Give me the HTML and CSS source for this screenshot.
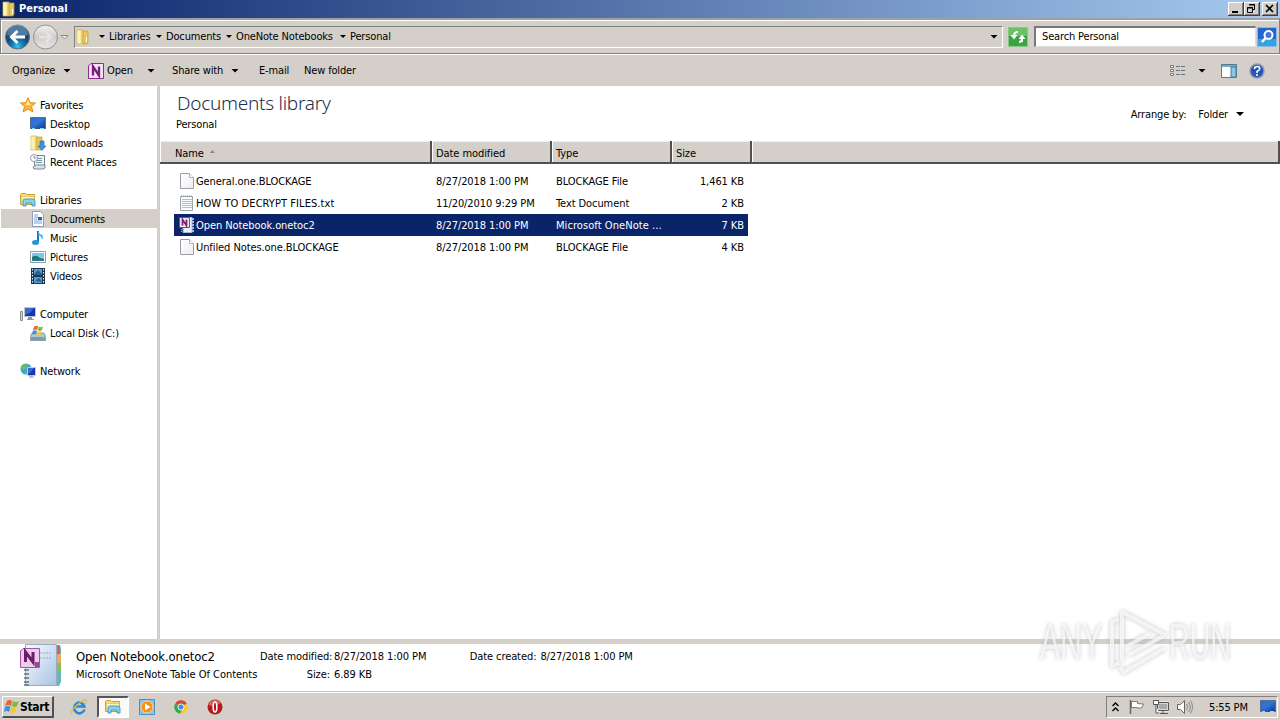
FILE: index.html
```html
<!DOCTYPE html>
<html lang="en">
<head>
<meta charset="utf-8">
<title>Personal</title>
<link rel="stylesheet" href="styles.css">
</head>
<body>
<svg class="defs" aria-hidden="true">
<defs>
<linearGradient id="gold" x2="1"><stop stop-color="#f8e596"/><stop offset=".5" stop-color="#fff3b4"/><stop offset="1" stop-color="#dfb94b"/></linearGradient>
<linearGradient id="blue" x2="1" y2="1"><stop stop-color="#1b4fb5"/><stop offset=".5" stop-color="#2b6fd6"/><stop offset="1" stop-color="#12398f"/></linearGradient>
<linearGradient id="paper" x2="1" y2="1"><stop stop-color="#fff"/><stop offset="1" stop-color="#eceef0"/></linearGradient>
<radialGradient id="orb" cy=".9"><stop stop-color="#39c5f0"/><stop offset=".5" stop-color="#1777b4"/><stop offset="1" stop-color="#194878"/></radialGradient>
<linearGradient id="grey" y2="1" x2="0"><stop stop-color="#f4f2f0"/><stop offset=".5" stop-color="#cfccc9"/><stop offset="1" stop-color="#e9e7e5"/></linearGradient>
<symbol id="folder" viewBox="0 0 16 16"><path d="M2 1h6v14H2z" fill="url(#gold)" stroke="#d5b04c" stroke-width=".7"/><path d="M8 2h5v11l-1 2H8z" fill="#e9c65c" stroke="#c89e35" stroke-width=".7"/><path d="M3 2v12" stroke="#fff7c8"/><path d="M7 1v14" stroke="#e7c75f"/><path d="M11.500 8v5" stroke="#fff"/></symbol>
<symbol id="page" viewBox="0 0 16 16"><path d="M1.5.5h9l4 4v11h-13z" fill="url(#paper)" stroke="#9b9fa3"/><path d="M10.500.5v4h4" fill="#fff" stroke="#b1b5b8"/></symbol>
<symbol id="txt" viewBox="0 0 16 16"><path d="M1.500 1.500h12v14h-12z" fill="#f5fbfc" stroke="#9da9ae"/><path d="M3 4.500h10M3 6.500h10M3 8.500h10M3 10.500h10M3 12.500h10" stroke="#abc5cd"/><path d="M2 1h12" stroke="#829299" stroke-dasharray="1 1"/></symbol>
<symbol id="lib" viewBox="0 0 16 16"><path d="M.5 2.500l1-1h4l1 1h8v10H.5z" fill="#f7dd79" stroke="#c69f35"/><path d="M1.500 4.500h13l-1 5H1z" fill="#fff3ac" stroke="#dfbd54" stroke-width=".7"/><path d="M3 9q0-2 2-2h7q3 0 3 2v5h-3v-3H6v3H3z" fill="#8bd0ef" stroke="#358bb8" stroke-width=".8"/></symbol>
<symbol id="monitor" viewBox="0 0 16 16"><path d="M.5 1.500h15v11H.5z" fill="url(#blue)" stroke="#56708f"/><path d="M1 2h14L8 8l-7 2z" fill="#3976d5" opacity=".7"/><path d="M1 12.500h14" stroke="#34537e"/><path d="M2 12.500h3M10 12.500h4" stroke="#8edaff"/></symbol>
<symbol id="one" viewBox="0 0 16 16"><path d="M3 .5h12.500v15H.5V3z" fill="#f7e2f5" stroke="#8c2b8d"/><path d="M5 12.500v-9L11 12.500v-9" fill="none" stroke="#742077" stroke-width="2.300"/></symbol>
<symbol id="notebook" viewBox="0 0 16 16"><path d="M4 .5h9v15H4z" fill="#e8f0fb" stroke="#a8bbd4"/><path d="M14 1v14" stroke="#aeb9cc" stroke-width="2" stroke-dasharray="2 1"/><path d="M.5.500h10v10H.5z" fill="#f8e4f7" stroke="#963698"/><path d="M3.500 8.500V2.500L7.500 8.500V2.500" fill="none" stroke="#712474" stroke-width="1.700"/><path d="M2 12.500h3M2 14.500h3" stroke="#aaa" stroke-dasharray="1 1"/></symbol>
<symbol id="flag4" viewBox="0 0 16 16"><path d="M3 2q3-2 5 0L7 7Q4 5 1 7z" fill="#ef632c"/><path d="M9 2q3 2 6 0l-2 5q-3 2-5 0z" fill="#7dbd35"/><path d="M1 8q3-2 5.500 0L5 13Q3 11 0 13z" fill="#3593e2"/><path d="M7.500 8q3 2 5.500 0l-2 5q-3 2-5 0z" fill="#f9c72b"/></symbol>
</defs>
</svg>
<div class="window">
<header class="title"><svg class="i16"><use href="#folder"/></svg><b>Personal</b>
<div class="controls">
<svg class="cap" viewBox="0 0 16 14"><path d="M0 0h16v14H0z" fill="#404040"/><path d="M0 0h15v13H0z" fill="#fff"/><path d="M1 1h14v12H1z" fill="#808080"/><path d="M1 1h13v11H1z" fill="#d4d0c8"/><path d="M4 9h6v2H4z"/></svg>
<svg class="cap" viewBox="0 0 16 14"><path d="M0 0h16v14H0z" fill="#404040"/><path d="M0 0h15v13H0z" fill="#fff"/><path d="M1 1h14v12H1z" fill="#808080"/><path d="M1 1h13v11H1z" fill="#d4d0c8"/><path d="M5.500 3v-.5h5v5H9M5 3h6M3.500 5.500h5v5h-5zM3 6h6" fill="none" stroke="#000"/></svg>
<svg class="cap close" viewBox="0 0 16 14"><path d="M0 0h16v14H0z" fill="#404040"/><path d="M0 0h15v13H0z" fill="#fff"/><path d="M1 1h14v12H1z" fill="#808080"/><path d="M1 1h13v11H1z" fill="#d4d0c8"/><path d="M4 3l7 7M11 3l-7 7" stroke="#000" stroke-width="1.600"/></svg>
</div></header>
<nav class="nav">
<svg class="orbs" viewBox="0 0 66 28"><circle cx="12.500" cy="14" r="12" fill="url(#orb)" stroke="#5b7488"/><path d="M2 12a10.500 10.500 0 0 1 21 0q-10 4-21 0z" fill="#9bc9de" opacity=".4"/><path d="M20 14H7M12.500 8l-6 6 6 6" fill="none" stroke="#fff" stroke-width="3"/><circle cx="40.500" cy="14" r="12" fill="url(#grey)" stroke="#92918f"/><path d="M34 14h12M41 9l5 5-5 5" fill="none" stroke="#e5e3e1" stroke-width="2.500"/><path d="M56 12.500h7l-3.500 3.500z" fill="#eee" stroke="#8c8984"/></svg>
<div class="address"><svg class="i16"><use href="#folder"/></svg><i class="tri s c0"></i><span class="crumb w41">Libraries</span><i class="tri s"></i><span class="crumb w54">Documents</span><i class="tri s"></i><span class="crumb w98">OneNote Notebooks</span><i class="tri s"></i><span class="crumb">Personal</span><i class="tri end"></i></div>
<svg class="refresh" viewBox="0 0 20 20"><path d="M.5.500h19v19H.5z" fill="#3aa443" stroke="#8ac58b"/><path d="M1 1h18v8H1z" fill="#69c263"/><path d="M10 5q-4 0-4 4M14 15v-4" fill="none" stroke="#fff" stroke-width="2"/><path d="M2.500 8h7L6 12.500zM10.500 12h7L14 7.500z" fill="#fff"/><path d="M14 11q0 4-3 4" fill="none" stroke="#fff" stroke-width="2"/></svg>
<div class="search">Search Personal</div>
<svg class="find" viewBox="0 0 20 20"><path d="M.5.500h19v19H.5z" fill="#2464ce" stroke="#8ab9e3"/><path d="M1 12h18v7H1z" fill="#32a6dc"/><circle cx="11.500" cy="8" r="4" fill="#3d78d8" stroke="#fff" stroke-width="2"/><path d="M8.500 11L5 15" stroke="#fff" stroke-width="2.500"/></svg>
</nav>
<div class="tools">
<span class="t1">Organize</span><i class="tri t2"></i><svg class="i16 t3"><use href="#one"/></svg><span class="t4">Open</span><i class="tri t5"></i><span class="t6">Share with</span><i class="tri t7"></i><span class="t8">E-mail</span><span class="t9">New folder</span>
<div class="right"><svg class="i16" viewBox="0 0 16 16"><path d="M.5 2.500h3v2h-3zM.5 6.500h3v2h-3zM.5 10.500h3v2h-3z" fill="#fff" stroke="#777"/><path d="M6 3.500h4m1 0h4M6 7.500h4m1 0h4M6 11.500h4m1 0h4" stroke="#667380"/></svg><i class="tri"></i><svg class="i16 pane" viewBox="0 0 16 16"><path d="M.5 1.500h15v13H.5z" fill="#fff" stroke="#557b92"/><path d="M1 2h14v2H1z" fill="#75a9c4"/><path d="M10 4h5v10h-5z" fill="#86c8df" stroke="#457e9d"/></svg><svg class="i16" viewBox="0 0 16 16"><circle cx="8" cy="8" r="7" fill="#2854b8" stroke="#8f9bb2" stroke-width="1.500"/><path d="M5.500 6q0-2.500 2.700-2.500T10.700 6Q10.600 7.200 8 8.500V10M8 11v2" fill="none" stroke="#fff" stroke-width="1.600"/></svg></div>
</div>
<main class="main">
<aside class="side">
<div class="item"><svg class="i16" viewBox="0 0 16 16"><path d="M8 .7l2.300 5 5.200.3-4 3.600 1.500 5.400L8 12l-5 3 1.500-5.400-4-3.600 5.200-.3z" fill="#fdb931" stroke="#e28b1d"/><path d="M8 3l1.500 4 3 .2-7 1z" fill="#fff0a6"/></svg>Favorites</div>
<div class="item sub"><svg class="i16"><use href="#monitor"/></svg>Desktop</div>
<div class="item sub"><svg class="i16" viewBox="0 0 16 16"><use href="#folder" x="-1"/><path d="M10 6h4v5h2l-4 4.500L8 11h2z" fill="#3b94df" stroke="#1b66ad" stroke-width=".6"/></svg>Downloads</div>
<div class="item sub"><svg class="i16" viewBox="0 0 16 16"><path d="M4.500 1.500h10v10h-10z" fill="#eef5f8" stroke="#74838d"/><path d="M6 4.500h6M6 6.500h6M6 8.500h6" stroke="#7c98a7"/><path d="M3 13l3-2h9v3l-2 1H4z" fill="#d7e2e6" stroke="#7b8b92"/><circle cx="4" cy="4" r="3.500" fill="#fff" stroke="#909ca3"/><path d="M4 2v2h2" fill="none" stroke="#789"/></svg>Recent Places</div>
<div class="item gap"><svg class="i16"><use href="#lib"/></svg>Libraries</div>
<div class="item sub sel"><svg class="i16" viewBox="0 0 16 16"><path d="M2.500.5h8l3 3v12h-11z" fill="#fff" stroke="#8b9dba"/><path d="M4 4h4M4 6h4M4 8h3M4 10h8M4 12h8" stroke="#7aa0cf"/><path d="M8 6h4v3H8z" fill="#315fa7"/></svg>Documents</div>
<div class="item sub"><svg class="i16" viewBox="0 0 16 16"><path d="M8 1v11" stroke="#1b78b9" stroke-width="2"/><path d="M8 0q0 3 4 5 2 2 0 5 0-4-4-5z" fill="#4ab1e5"/><ellipse cx="5.500" cy="12.500" rx="3.500" ry="2.500" fill="#2694d4"/></svg>Music</div>
<div class="item sub"><svg class="i16" viewBox="0 0 16 16"><path d="M.5 2.500h15v11H.5z" fill="#fff" stroke="#8ba0ac"/><path d="M2 4h12v8H2z" fill="#7cc8ec"/><path d="M2 8q4-3 8 1l4 1v2H2z" fill="#267760"/><path d="M2 10h12v2H2z" fill="#2878a6"/></svg>Pictures</div>
<div class="item sub"><svg class="i16" viewBox="0 0 16 16"><path d="M1 0h14v16H1z" fill="#22374c"/><path d="M4 1h8v6H4zM4 9h8v6H4z" fill="#4c9ed4"/><path d="M5 5l3-3 4 4v1H4zM5 13l4-3 3 4z" fill="#315f94"/><path d="M2.500 1v14M13.500 1v14" stroke="#e7edf2" stroke-dasharray="1.500 1.500"/></svg>Videos</div>
<div class="item gap"><svg class="i16" viewBox="0 0 16 16"><path d="M.5 5.500h2v9h-2z" fill="#d4d9d7" stroke="#89908d"/><path d="M4.500 1.500h11v9h-11z" fill="#1934aa" stroke="#bec7d4"/><path d="M5 2h9l-4 5-5 2z" fill="#3e65d0"/><path d="M8 11h4v2h2v1H7v-1h1z" fill="#8797a9"/></svg>Computer</div>
<div class="item sub"><svg class="i16" viewBox="0 0 16 16"><path d="M2 8h12l2 4v3.500H0V12z" fill="#b8c5cb" stroke="#73848c" stroke-width=".7"/><path d="M1 12h14v3H1z" fill="#6c9fb1"/><path d="M12 13h2" stroke="#77e16c"/><use href="#flag4" x="2" y="0" width="12" height="12"/></svg>Local Disk (C:)</div>
<div class="item gap"><svg class="i16" viewBox="0 0 16 16"><circle cx="6" cy="6" r="5.500" fill="#37a4d2"/><path d="M2 2q4-2 6 0l-2 4-4 1-1-3zM5 7l2 3-2 1z" fill="#65bd68"/><path d="M7.500 4.500h8v8h-8z" fill="#1938ae" stroke="#c2cddb"/><path d="M8 5h6l-3 4-3 2z" fill="#3e67ce"/><path d="M9 14h5M11 12v2" stroke="#8498ad"/></svg>Network</div>
</aside>
<section class="content">
<div class="heading"><div><h1>Documents library</h1><p>Personal</p></div><div class="arrange"><span>Arrange by:</span><span>Folder</span><i class="tri"></i></div></div>
<div class="row head"><div>Name<i class="up"></i></div><div>Date modified</div><div>Type</div><div>Size</div><div></div></div>
<div class="files">
<div class="row"><div><svg class="i16"><use href="#page"/></svg><span>General.one.BLOCKAGE</span></div><div>8/27/2018 1:00 PM</div><div>BLOCKAGE File</div><div>1,461 KB</div></div>
<div class="row"><div><svg class="i16"><use href="#txt"/></svg><span class="wide">HOW TO DECRYPT FILES.txt</span></div><div>11/20/2010 9:29 PM</div><div>Text Document</div><div>2 KB</div></div>
<div class="row active"><div><svg class="i16"><use href="#notebook"/></svg><span>Open Notebook.onetoc2</span></div><div>8/27/2018 1:00 PM</div><div class="wide">Microsoft OneNote ...</div><div>7 KB</div></div>
<div class="row"><div><svg class="i16"><use href="#page"/></svg><span>Unfiled Notes.one.BLOCKAGE</span></div><div>8/27/2018 1:00 PM</div><div>BLOCKAGE File</div><div>4 KB</div></div>
</div>
</section>
</main>
<section class="details">
<svg class="big" viewBox="0 0 42 44"><defs><linearGradient id="nb" x2="1" y2="1"><stop stop-color="#f8fcff"/><stop offset="1" stop-color="#a9c3e4"/></linearGradient></defs><path d="M36 1h4l1 4v33l-2 4h-3z" fill="#5fbbb3"/><path d="M37 1h3v9h-3z" fill="#d95e6e"/><path d="M37 10h4v9h-4z" fill="#ecad56"/><path d="M37 19h4v9h-4z" fill="#85bd63"/><path d="M5.500.5h31v41h-31z" fill="url(#nb)" stroke="#9aabc2"/><path d="M20 9h11M20 14h11" stroke="#9cacbf" stroke-dasharray="2 1"/><path d="M4 26h5M4 30h5M4 34h5M4 38h5M4 41h5" stroke="#647385" stroke-width="1.500"/><path d="M3 4.500h16.500v19H.5V7z" fill="#efcdea" stroke="#a154a2"/><path d="M5.500 18V8L13 18V8" fill="none" stroke="#672069" stroke-width="3"/><path d="M15 18h4v5h-4z" fill="#9e459f"/></svg>
<div class="dname"><div class="big-name">Open Notebook.onetoc2</div><div class="wide">Microsoft OneNote Table Of Contents</div></div>
<dl class="d1"><dt>Date modified:</dt><dd>8/27/2018 1:00 PM</dd><dt>Size:</dt><dd>6.89 KB</dd></dl>
<dl class="d2"><dt>Date created:</dt><dd>8/27/2018 1:00 PM</dd></dl>
</section>
<footer class="task">
<div class="start"><svg class="i16"><use href="#flag4"/></svg><b>Start</b></div>
<div class="quick">
<div class="q"><svg class="i16" viewBox="0 0 16 16"><path d="M13.500 10.500A5.300 5.300 0 1 1 13.500 7.500H5" fill="none" stroke="#258bd8" stroke-width="2.600"/><path d="M1 15Q-1 12 6 6T15 1q1 1-1 4" fill="none" stroke="#e8bc3c" stroke-width="1.300"/></svg></div>
<div class="q open"><svg class="i16"><use href="#lib"/></svg></div>
<div class="q"><svg class="i16" viewBox="0 0 16 16"><path d="M.5.500h15v15H.5z" fill="#8bc4e9" stroke="#4f91bd"/><circle cx="8" cy="8" r="6" fill="#f5911f" stroke="#fbd199"/><path d="M6 4.500l5.500 3.500L6 11.500z" fill="#fff"/></svg></div>
<div class="q"><svg class="chrome" viewBox="0 0 16 16"><circle cx="8" cy="8" r="7.500" fill="#f6cb30"/><path d="M8 8L1.500 4A7.500 7.500 0 0 1 14.500 4z" fill="#dc4437"/><path d="M1.500 4A7.500 7.500 0 0 0 7 15.500L10 10z" fill="#39a553"/><circle cx="8" cy="8" r="3.500" fill="#4a8ce5" stroke="#fff"/></svg></div>
<div class="q"><svg class="i16" viewBox="0 0 16 16"><circle cx="8" cy="8" r="7.500" fill="#b41920"/><path d="M1.500 6A7 7 0 0 1 14 4Q8 8 1.500 6z" fill="#e0655f"/><ellipse cx="8" cy="8" rx="1.800" ry="5" fill="#b01219" stroke="#fff" stroke-width="1.600"/></svg></div>
</div>
<div class="tray"><svg class="arrows" viewBox="0 0 7 10"><path d="M.5 4l3-3 3 3M.5 9l3-3 3 3" fill="none" stroke="#000" stroke-width="1.400"/></svg><svg class="i16" viewBox="0 0 16 16"><path d="M1.500 1v14" stroke="#666" stroke-width="1.500"/><path d="M2.500 2.500h6v2l6 .5-2 4H8V8.500H2.500z" fill="#fff" stroke="#777"/></svg><svg class="i16 net" viewBox="0 0 16 16"><path d="M4.500 3.500h11v8h-11z" fill="#aaa" stroke="#fff" stroke-width="2"/><path d="M4.500 3.500h11v8h-11zM7 14.500h8M10 12v2" fill="none" stroke="#555"/><path d="M.5 1.500h5v4h-5zM3 6v8h3" fill="#fff" stroke="#555"/></svg><svg class="i16 vol" viewBox="0 0 16 16"><path d="M.5 5.500h3l4-4v13l-4-4h-3z" fill="#fff" stroke="#666"/><path d="M9.500 5q2 3 0 6M11.500 3q3.500 5 0 10M13.500 1.500q4 6.500 0 13" fill="none" stroke="#888"/></svg><span class="clock">5:55 PM</span><svg class="i16 show"><use href="#monitor"/></svg></div>
</footer>
<svg class="mark" viewBox="0 0 200 70"><g fill="#fff" fill-opacity=".65"><text x="4" y="54" textLength="62" lengthAdjust="spacingAndGlyphs">ANY</text><text x="133" y="54" textLength="62" lengthAdjust="spacingAndGlyphs">RUN</text></g><path d="M86 56V7l43 23-36 20M83 14l-7 3v44l7-3M84 62l4 5 41-24M93 40l20-11" fill="none" stroke="#fff" stroke-opacity=".7" stroke-width="4" stroke-linejoin="round"/></svg>
</div>
</body>
</html>
```
FILE: styles.css
```css
* { box-sizing: border-box; }
body { margin: 0; overflow: hidden; }
.defs { position: absolute; width: 0; height: 0; }
.window { width: 1280px; height: 720px; display: flex; flex-direction: column; position: relative; background: #d4cfc8; color: #000; font: 11px/19px "DejaVu Sans Condensed", "DejaVu Sans", sans-serif; font-stretch: condensed; letter-spacing: -.15px; white-space: nowrap; }
svg { flex: none; display: block; }
.i16 { width: 16px; height: 16px; }
.tri { flex: none; width: 8px; height: 4px; background: #000; clip-path: polygon(0 0, 100% 0, 50% 100%); }
.tri.s { width: 6px; height: 3px; }
.title { height: 18px; flex: none; display: flex; align-items: center; color: #fff; padding-left: 1px; gap: 2px; line-height: 18px; background: linear-gradient(90deg, #0a246a, #a6caf0); }
.title b { letter-spacing: 0; }
.controls { display: flex; margin-left: auto; padding-right: 2px; }
.cap { width: 16px; height: 14px; }
.close { margin-left: 2px; }
.nav { height: 36px; flex: none; display: flex; align-items: center; border: 1px solid #808080; border-width: 2px 1px 1px; border-top-color: #a09f9f; box-shadow: 0 1px #fff, inset 1px 1px #fff; padding-left: 4px; }
.orbs { width: 66px; height: 28px; }
.address { width: 929px; height: 22px; margin-left: 3px; display: flex; align-items: center; border: 1px solid #808080; border-right-color: #fff; border-bottom-color: #fff; }
.crumb, .search { line-height: 17px; padding-bottom: 1px; }
.w41 { width: 41px; }
.w54 { width: 54px; }
.w98 { width: 98px; }
.address .tri { margin: 0 4px 0 6px; }
.address .c0 { margin-left: 8px; }
.address .end { margin: 0 4px 0 auto; }
.refresh { width: 20px; height: 20px; margin-left: 5px; }
.search { width: 222px; height: 21px; margin: 0 1px 0 6px; padding-left: 6px; background: #fff; border: 1px solid #777; border-width: 2px 1px 1px 2px; border-right-color: #ddd; border-bottom-color: #ddd; }
.find { width: 20px; height: 20px; }
.tools { height: 32px; flex: none; display: flex; align-items: center; padding-left: 12px; border-top: 1px solid #fff; }
.t1 { width: 51px; }
.t3 { margin-left: 17px; }
.t4 { width: 40px; margin-left: 3px; }
.t6 { width: 60px; margin-left: 17px; }
.t7 { margin-right: 20px; margin-left: -1px; }
.t8 { width: 45px; }
.right { display: flex; align-items: center; margin-left: auto; padding-right: 15px; }
.right .tri { margin: 0 15px 0 12px; }
.pane { margin-right: 12px; }
.main { height: 553px; flex: none; display: flex; background: #fff; }
.side { width: 160px; padding-top: 9px; border-right: 3px solid #d4cfc8; }
.item { height: 19px; display: flex; align-items: center; gap: 4px; padding: 2px 0 0 20px; }
.item svg { margin-top: -2px; }
.item.sub { padding-left: 30px; }
.item.sel { background: #d4cfc8; margin-left: 1px; padding-left: 29px; }
.gap { margin-top: 19px; }
.content { flex: 1; }
.heading { height: 55px; display: flex; justify-content: space-between; padding: 5px 36px 0 16px; }
h1 { font: 19px/24px "Noto Sans", sans-serif; letter-spacing: -.27px; color: #1e2d4d; margin: 0 0 0 1px; font-weight: 300; }
p { margin: 0; line-height: 19px; }
.arrange { display: flex; align-items: center; gap: 12px; height: 46px; }
.arrange .tri { margin-left: -4px; }
.row { display: grid; grid-template-columns: 257px 120px 120px 77px; align-items: center; height: 22px; width: 574px; margin-left: 14px; letter-spacing: -.08px; }
.row > div { display: flex; align-items: center; padding-left: 5px; }
.files .row > div:last-child { justify-content: flex-end; padding-right: 4px; }
.files .row > div:first-child svg { margin-right: 1px; }
.row .wide { letter-spacing: .07px; }
.wide { letter-spacing: -.03px; }
.head { height: 23px; width: auto; margin: 0; grid-template-columns: 272px 120px 120px 80px 1fr; background: #d4cfc8; border-bottom: 2px solid #505050; box-shadow: inset 0 1px #eee; }
.head > div { height: 21px; border-right: 2px solid #505050; padding: 3px 0 0 4px; box-shadow: inset 1px 0 #fff; }
.head > div:first-child { padding-left: 15px; }
.files { padding-top: 6px; }
.active { background: #0a246a; color: #fff; }
.up { width: 5px; height: 3px; margin: -3px 0 0 6px; background: #888; clip-path: polygon(0 100%, 100% 100%, 50% 0); }
.details { height: 53px; flex: none; display: flex; background: #fff; border-top: 5px solid #d4cfc8; padding-left: 20px; }
.big { width: 42px; height: 44px; }
.dname { width: 184px; margin-left: 14px; padding-top: 4px; line-height: 18px; }
.big-name { font-size: 13px; letter-spacing: -.17px; }
dl { display: grid; grid-template-columns: 70px auto; column-gap: 4px; margin: 4px 0 0; line-height: 18px; align-content: start; letter-spacing: -.08px; }
dt { text-align: right; }
dd { margin: 0; }
.d2 { margin-left: 43px; grid-template-columns: 67px auto; }
.task { height: 28px; flex: none; display: flex; align-items: center; border-top: 1px solid #fff; box-shadow: 0 -1px #c5c2bd; padding: 1px 2px 0; }
.start { width: 52px; height: 22px; display: flex; align-items: center; gap: 0; border: 1px solid #fff; border-width: 1px 2px 2px 1px; border-right-color: #505050; border-bottom-color: #505050; }
.start svg { margin-left: 1px; }
.start b { font-size: 12px; padding-top: 2px; letter-spacing: -.35px; }
.quick { display: flex; gap: 2px; margin-left: 9px; }
.q { width: 32px; height: 22px; display: flex; align-items: center; justify-content: center; }
.open { border: 2px solid #555; border-right-color: #fff; border-bottom-color: #fff; background: #faf9f7; }
.chrome { width: 14px; height: 14px; }
.tray { width: 172px; height: 22px; display: flex; align-items: center; margin-left: auto; padding-left: 5px; border: 1px solid #808080; border-right-color: #fff; border-bottom-color: #fff; }
.arrows { width: 7px; height: 10px; margin-right: 10px; }
.net { margin-left: 8px; }
.vol { margin-left: 8px; }
.clock { width: 40px; margin-left: 16px; }
.show { margin-left: 11px; }
.mark { position: absolute; left: 1036px; top: 605px; width: 200px; height: 70px; overflow: visible; filter: drop-shadow(0 0 2px #aaa); font: 50px "Liberation Sans", sans-serif; letter-spacing: 0; }
```
